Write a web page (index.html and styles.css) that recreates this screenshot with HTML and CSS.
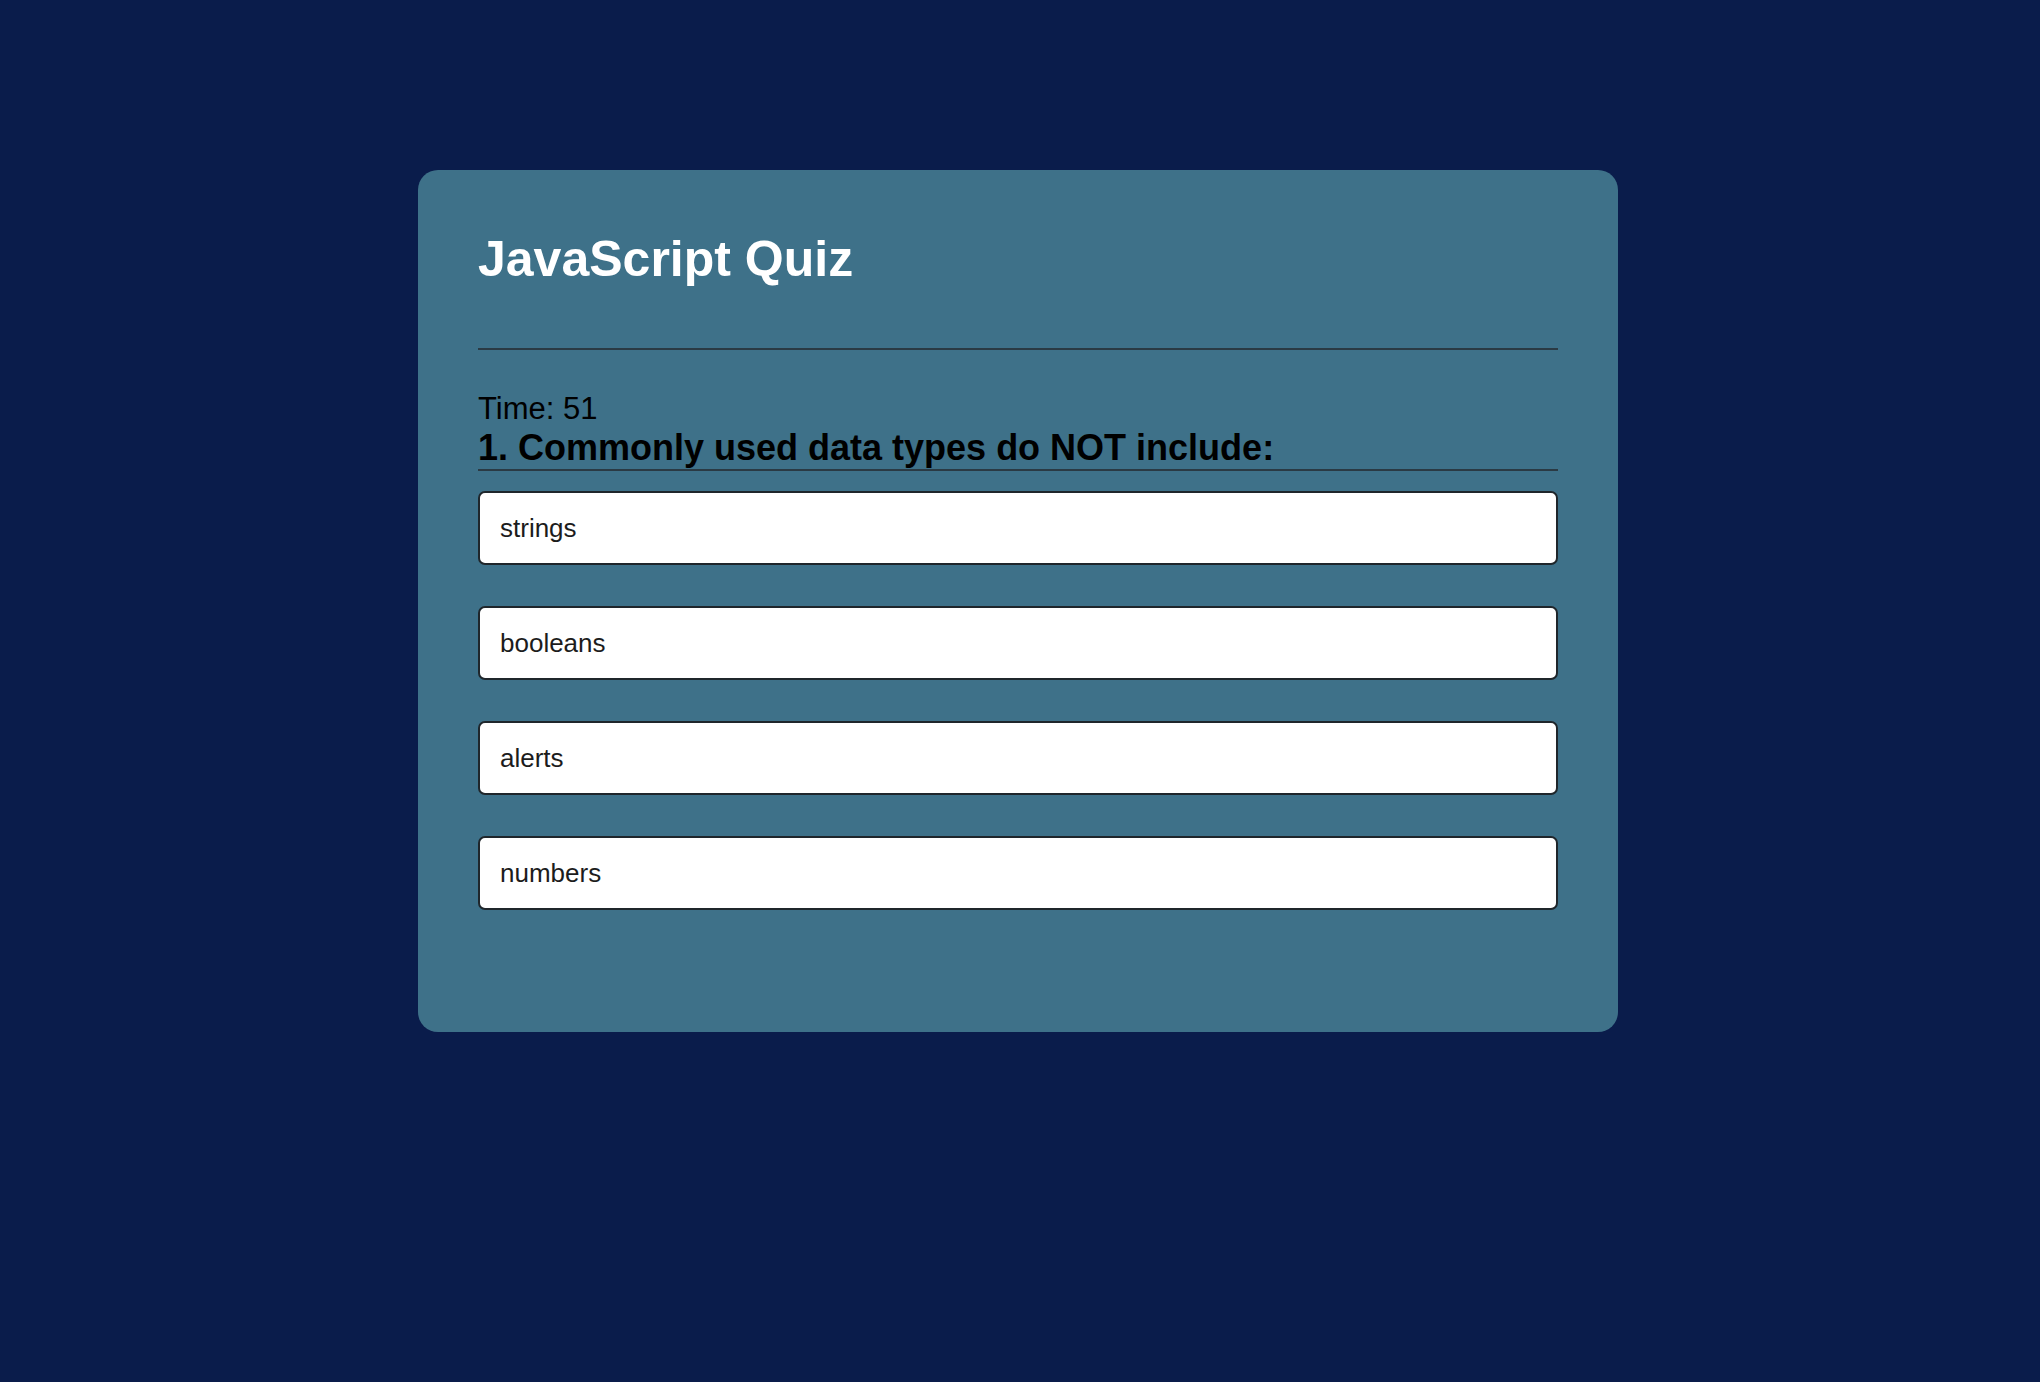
FILE: index.html
```html
<!DOCTYPE html>
<html lang="en">
<head>
<meta charset="utf-8">
<title>JavaScript Quiz</title>
<link rel="stylesheet" href="styles.css">
</head>
<body>
  <main class="quiz-card">
    <h1 class="quiz-title">JavaScript Quiz</h1>
    <hr class="divider">
    <div class="timer">Time: 51</div>
    <h2 class="question">1. Commonly used data types do NOT include:</h2>
    <ul class="choices">
      <li class="choice">strings</li>
      <li class="choice">booleans</li>
      <li class="choice">alerts</li>
      <li class="choice">numbers</li>
    </ul>
  </main>
</body>
</html>
```

FILE: styles.css
```css
html, body {
  margin: 0;
  padding: 0;
}

body {
  background: #0a1c4b;
  font-family: "Liberation Sans", Arial, Helvetica, sans-serif;
  min-height: 100vh;
  padding: 170px 4px 0 0;
  box-sizing: border-box;
}

.quiz-card {
  width: 1200px;
  margin: 0 auto;
  box-sizing: border-box;
  background: #3e7189;
  border-radius: 20px;
  padding: 60px 60px 122px 60px;
}

.quiz-title {
  margin: 0;
  font-size: 50px;
  font-weight: bold;
  line-height: normal;
  color: #ffffff;
}

.divider {
  margin: 60px 0 41px 0;
  border: 0;
  height: 2px;
  background: #2a3a44;
}

.timer {
  font-size: 31px;
  line-height: normal;
  color: #000000;
}

.question {
  margin: 0;
  font-size: 36px;
  font-weight: bold;
  line-height: normal;
  color: #000000;
  border-bottom: 2px solid #2a3a44;
}

.choices {
  list-style: none;
  margin: 20px 0 0 0;
  padding: 0;
  display: flex;
  flex-direction: column;
  gap: 41px;
}

.choice {
  background: #ffffff;
  border: 2px solid #1f262b;
  border-radius: 7px;
  padding: 20px 20px;
  font-size: 26px;
  line-height: 30px;
  color: #1c1c1c;
}
```
